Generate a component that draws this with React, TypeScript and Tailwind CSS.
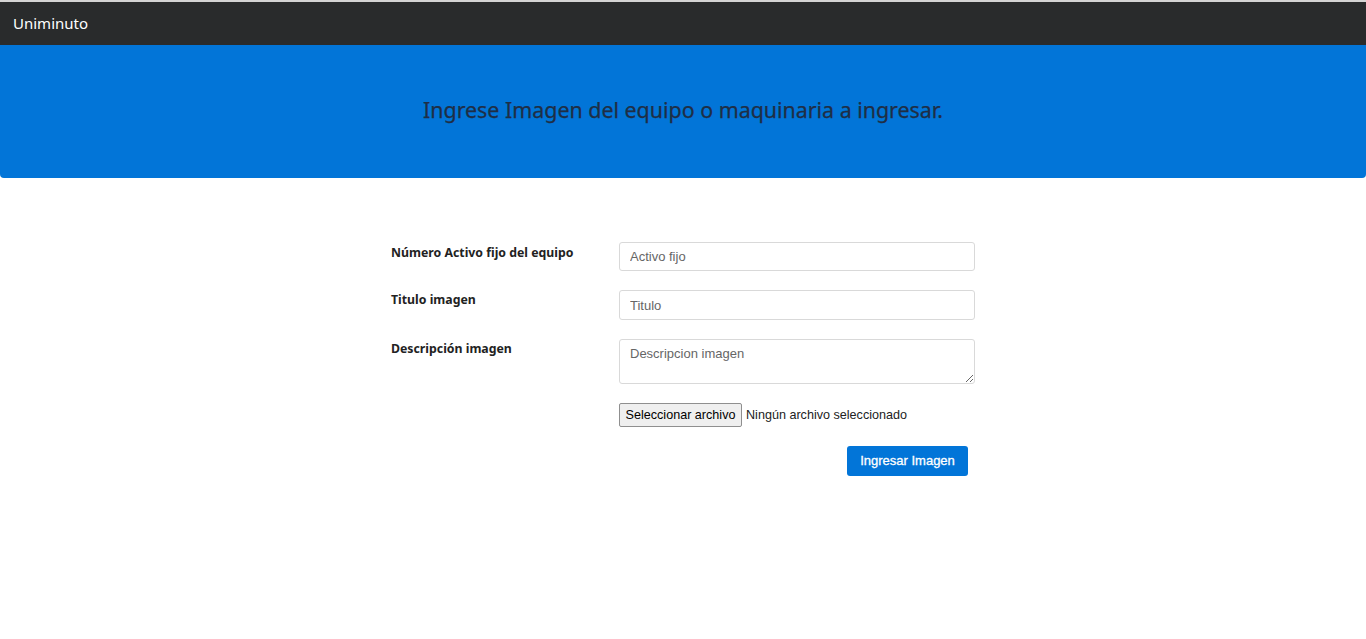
import React from "react";

export default function App() {
  return (
    <div className="min-h-[639px] bg-white" style={{ fontFamily: '"Noto Sans", "Open Sans", sans-serif' }}>
      <div className="h-[2px] bg-[#d4d4d4]" />
      <nav className="h-[43px] bg-[#292b2c] flex items-center px-[13px]">
        <span className="text-white text-[15px] leading-none">Uniminuto</span>
      </nav>
      <div className="h-[133px] bg-[#0275d8] rounded-b-[4px] flex items-center justify-center">
        <h1 className="text-[21.4px] text-[#1f2e45] leading-none pb-[4px]" style={{ WebkitTextStroke: "0.25px #1f2e45" }}>
          Ingrese Imagen del equipo o maquinaria a ingresar.
        </h1>
      </div>
      <div className="flex justify-center pt-[64px]">
        <form className="w-[584px] flex flex-col" onSubmit={(e) => e.preventDefault()}>
          <div className="flex h-[29px] mb-[19px]">
            <label className="w-[228px] text-[12.3px] font-bold text-[#222] pt-[2px]">Número Activo fijo del equipo</label>
            <input
              placeholder="Activo fijo"
              className="w-[356px] h-[29px] border border-[#d9d9d9] rounded-[3px] px-[10px] text-[13px] placeholder-[#666] text-[#333] outline-none"
              style={{ fontFamily: '"Liberation Sans", Arial, sans-serif' }}
            />
          </div>
          <div className="flex h-[30px] mb-[19px]">
            <label className="w-[228px] text-[12.3px] font-bold text-[#222] pt-[1px]">Titulo imagen</label>
            <input
              placeholder="Titulo"
              className="w-[356px] h-[30px] border border-[#d9d9d9] rounded-[3px] px-[10px] text-[13px] placeholder-[#666] text-[#333] outline-none"
              style={{ fontFamily: '"Liberation Sans", Arial, sans-serif' }}
            />
          </div>
          <div className="flex h-[45px] mb-[19px]">
            <label className="w-[228px] text-[12.3px] font-bold text-[#222] pt-[1px]">Descripción imagen</label>
            <textarea
              placeholder="Descripcion imagen"
              className="w-[356px] h-[45px] border border-[#d9d9d9] rounded-[3px] px-[10px] pt-[4px] text-[13px] placeholder-[#666] text-[#333] outline-none resize-y"
              style={{ fontFamily: '"Liberation Sans", Arial, sans-serif' }}
            />
          </div>
          <div className="flex h-[24px] mb-[19px]">
            <div className="w-[228px]" />
            <div className="flex items-center text-[12.6px] text-[#222]" style={{ fontFamily: '"Liberation Sans", Arial, sans-serif' }}>
              <span className="h-[24px] w-[123px] flex items-center justify-center border border-[#8f8f8f] bg-[#efefef] rounded-[2px] text-black">
                Seleccionar archivo
              </span>
              <span className="ml-[4px]">Ningún archivo seleccionado</span>
            </div>
          </div>
          <div className="flex">
            <div className="w-[456px]" />
            <button
              type="submit"
              className="w-[121px] h-[30px] bg-[#0275d8] text-white text-[13px] rounded-[3px]"
              style={{ fontFamily: '"Liberation Sans", Arial, sans-serif', WebkitTextStroke: "0.3px white" }}
            >
              Ingresar Imagen
            </button>
          </div>
        </form>
      </div>
    </div>
  );
}
